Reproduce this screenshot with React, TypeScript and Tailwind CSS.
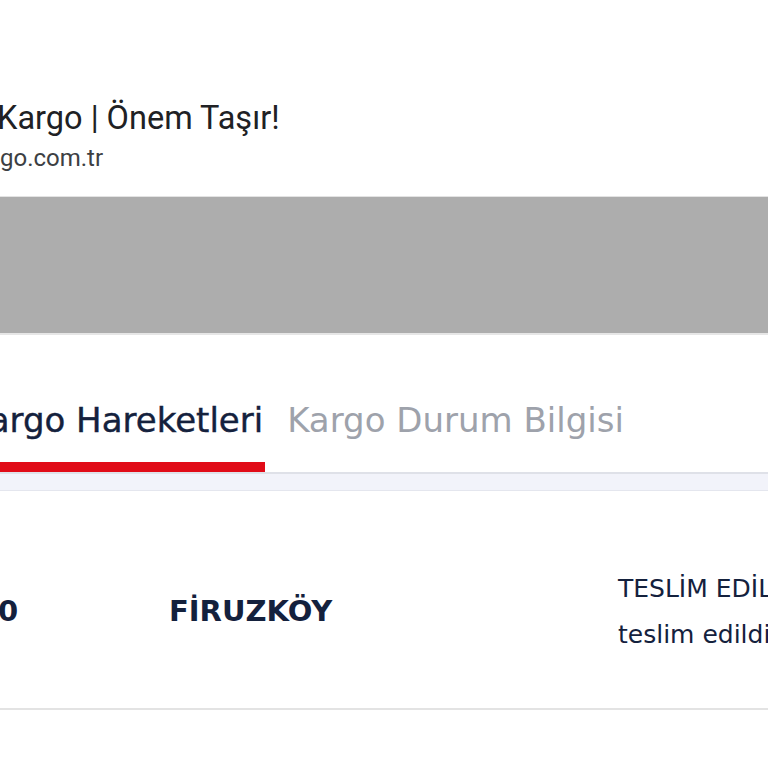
import React from "react";

export default function App() {
  return (
    <div className="w-[768px] h-[768px] overflow-hidden bg-white flex flex-col">
      {/* browser site header */}
      <div className="h-[196px] flex flex-col pt-[96px] shrink-0 overflow-hidden" style={{ fontFamily: "Roboto, 'Noto Sans', sans-serif" }}>
        <div className="ml-[-3px] text-[32.5px] leading-[45px] text-[#202124] whitespace-nowrap">Kargo | Önem Taşır!</div>
        <div className="mt-[3px] text-[24px] leading-[28px] text-[#3c4043] whitespace-nowrap">go.com.tr</div>
      </div>
      <div className="h-[1px] bg-[#e3e3e3] shrink-0" />
      <div className="h-[136px] bg-[#adadad] shrink-0" />
      <div className="h-[2px] bg-[#e6e6e6] shrink-0" />
      {/* tabs */}
      <div className="h-[137px] flex items-end shrink-0 overflow-hidden" style={{ fontFamily: "'DejaVu Sans', sans-serif" }}>
        <div className="flex flex-col ml-[-33px] shrink-0">
          <div className="text-[34px] leading-[44px] text-[#14213d] whitespace-nowrap pr-[2px]" style={{ WebkitTextStroke: "0.4px #14213d" }}>Kargo Hareketleri</div>
          <div className="mt-[20px] h-[10px] bg-[#e10b17]" />
        </div>
        <div className="ml-[22px] flex flex-col self-end mb-[30px] shrink-0">
          <div className="text-[34px] leading-[44px] text-[#9ea2ab] whitespace-nowrap">Kargo Durum Bilgisi</div>
        </div>
      </div>
      <div className="h-[2px] bg-[#dfe1e8] shrink-0" />
      <div className="h-[16px] bg-[#f2f3fa] shrink-0" />
      <div className="h-[1px] bg-[#e4e6ee] shrink-0" />
      {/* row */}
      <div className="h-[217px] flex items-center shrink-0 pt-[24px] overflow-hidden" style={{ fontFamily: "'DejaVu Sans', sans-serif" }}>
        <div className="w-[170px] shrink-0 text-[29px] font-bold text-[#14213d] ml-[-2px]">0</div>
        <div className="w-[449px] shrink-0 text-[29px] font-bold text-[#14213d] whitespace-nowrap ml-[1px]">FİRUZKÖY</div>
        <div className="flex flex-col shrink-0 text-[25px] leading-[46px] text-[#14213d] whitespace-nowrap mt-[0px]">
          <div>TESLİM EDİLDİ</div>
          <div>teslim edildi</div>
        </div>
      </div>
      <div className="h-[2px] bg-[#e3e3e3] shrink-0" />
    </div>
  );
}
